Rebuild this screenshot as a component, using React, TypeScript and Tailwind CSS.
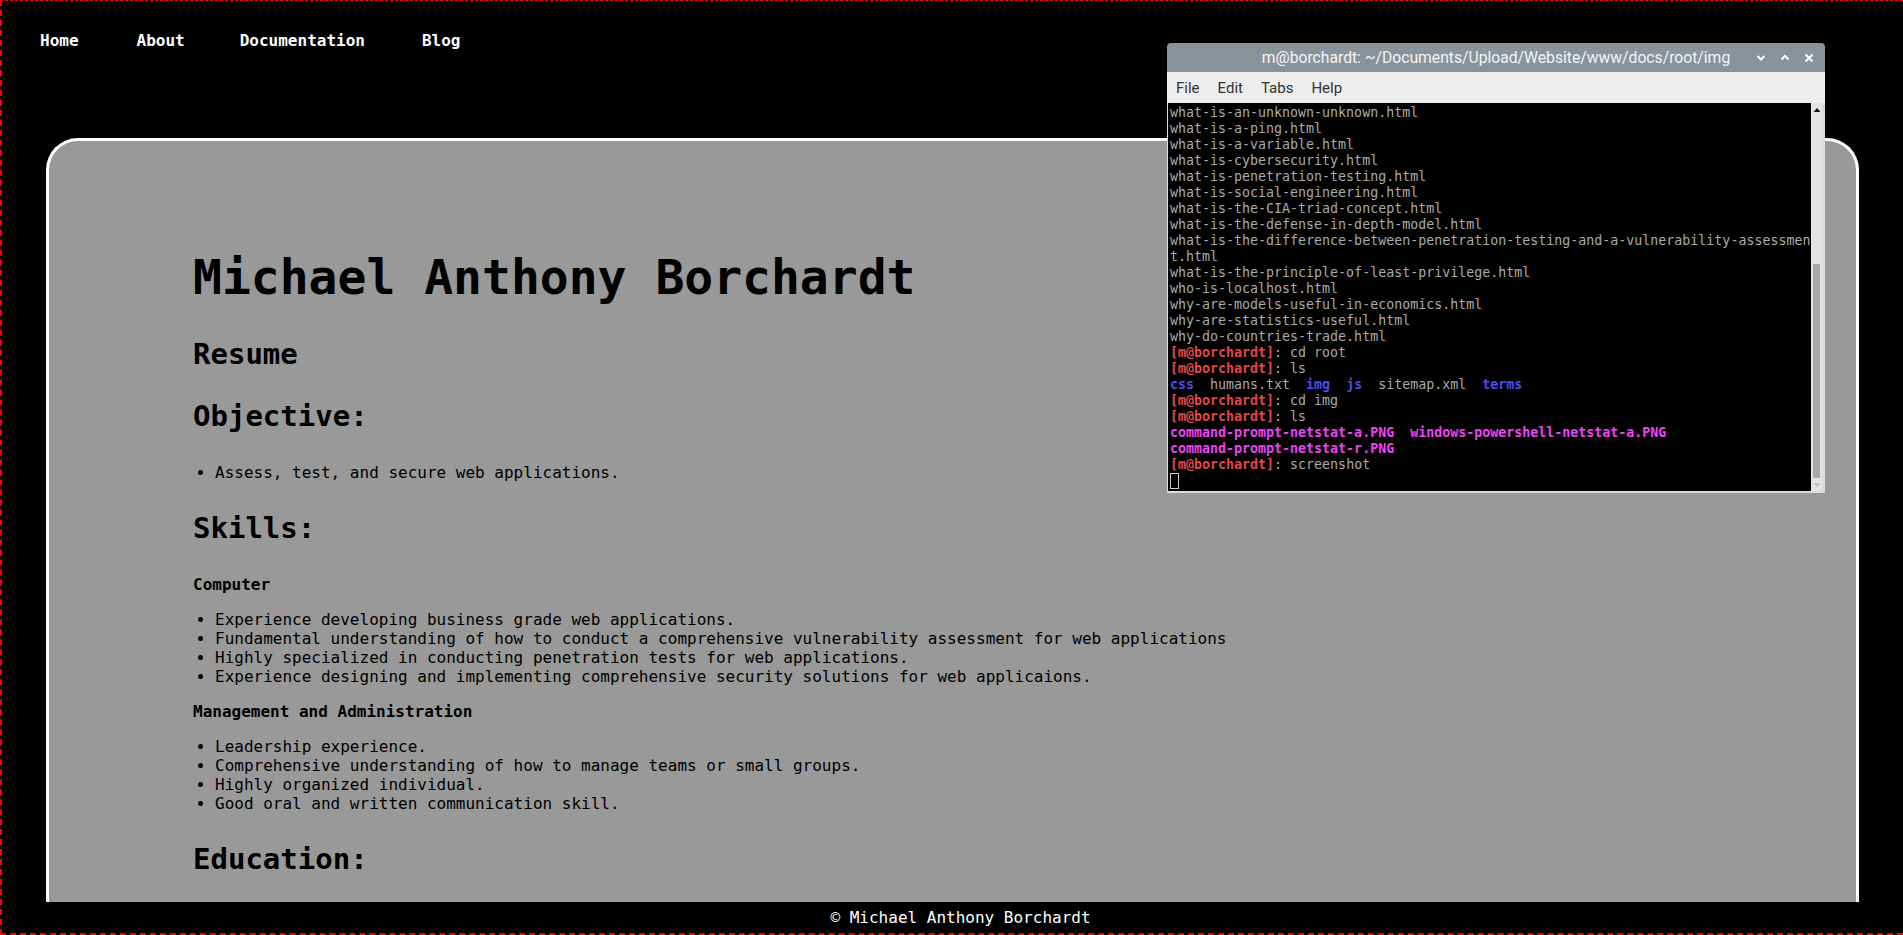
import React from "react";

type Kind = "n" | "p" | "d" | "m";
type Seg = { t: string; k?: Kind };

const segClass: Record<Kind, string> = {
  n: "text-[#aaaaaa]",
  p: "text-[#e44848] font-bold",
  d: "text-[#4c4cec] font-bold",
  m: "text-[#ee44ee] font-bold",
};

const prompt = (cmd: string): Seg[] => [
  { t: "[m@borchardt]", k: "p" },
  { t: ": " + cmd, k: "n" },
];

const termLines: Seg[][] = [
  [{ t: "what-is-an-unknown-unknown.html" }],
  [{ t: "what-is-a-ping.html" }],
  [{ t: "what-is-a-variable.html" }],
  [{ t: "what-is-cybersecurity.html" }],
  [{ t: "what-is-penetration-testing.html" }],
  [{ t: "what-is-social-engineering.html" }],
  [{ t: "what-is-the-CIA-triad-concept.html" }],
  [{ t: "what-is-the-defense-in-depth-model.html" }],
  [{ t: "what-is-the-difference-between-penetration-testing-and-a-vulnerability-assessmen" }],
  [{ t: "t.html" }],
  [{ t: "what-is-the-principle-of-least-privilege.html" }],
  [{ t: "who-is-localhost.html" }],
  [{ t: "why-are-models-useful-in-economics.html" }],
  [{ t: "why-are-statistics-useful.html" }],
  [{ t: "why-do-countries-trade.html" }],
  prompt("cd root"),
  prompt("ls"),
  [
    { t: "css", k: "d" },
    { t: "  humans.txt  " },
    { t: "img", k: "d" },
    { t: "  " },
    { t: "js", k: "d" },
    { t: "  sitemap.xml  " },
    { t: "terms", k: "d" },
  ],
  prompt("cd img"),
  prompt("ls"),
  [
    { t: "command-prompt-netstat-a.PNG", k: "m" },
    { t: "  " },
    { t: "windows-powershell-netstat-a.PNG", k: "m" },
  ],
  [{ t: "command-prompt-netstat-r.PNG", k: "m" }],
  prompt("screenshot"),
];

function Terminal() {
  return (
    <div className="absolute left-[1165px] top-[42px] w-[658px] h-[450px] flex flex-col">
      {/* title bar */}
      <div className="relative h-[29px] bg-[#8a939a] rounded-t-[4px] flex items-center justify-center">
        <span className="font-['Roboto',sans-serif] text-[15.7px] leading-[20px] text-[#f4f4f4]">
          m@borchardt: ~/Documents/Upload/Website/www/docs/root/img
        </span>
        <div className="absolute right-[11px] top-0 h-full flex items-center gap-[14px]">
          <svg width="10" height="10" viewBox="0 0 10 10">
            <polyline points="1.5,3 5,6.5 8.5,3" fill="none" stroke="#ffffff" strokeWidth="2" />
          </svg>
          <svg width="10" height="10" viewBox="0 0 10 10">
            <polyline points="1.5,6.5 5,3 8.5,6.5" fill="none" stroke="#ffffff" strokeWidth="2" />
          </svg>
          <svg width="10" height="10" viewBox="0 0 10 10">
            <path d="M1.5 1.5 L8.5 8.5 M8.5 1.5 L1.5 8.5" fill="none" stroke="#ffffff" strokeWidth="2" />
          </svg>
        </div>
      </div>
      {/* menu bar */}
      <div className="h-[31px] bg-[#ededed] flex items-center pt-[2px] pl-[9px] gap-[18px] font-['Roboto',sans-serif] text-[15px] text-[#333333]">
        <span>File</span>
        <span>Edit</span>
        <span>Tabs</span>
        <span>Help</span>
      </div>
      {/* terminal body */}
      <div className="flex-1 flex bg-[#dcdcdc] pl-[1px] pr-[3px] pb-[2px]">
        <div className="flex-1 bg-black pl-[2px] pt-[2px] overflow-hidden font-['DejaVu_Sans_Mono',monospace] text-[13.3px]">
          {termLines.map((line, i) => (
            <div key={i} className="h-[16px] leading-[16px] whitespace-pre">
              {line.map((s, j) => (
                <span key={j} className={segClass[s.k ?? "n"]}>
                  {s.t}
                </span>
              ))}
            </div>
          ))}
          <div className="h-[16px] flex items-center">
            <div className="w-[9px] h-[16px] border border-[#d0d0d0]" />
          </div>
        </div>
        {/* scrollbar */}
        <div className="w-[11px] bg-[#e4e4e4] flex flex-col items-center">
          <svg width="8" height="8" viewBox="0 0 8 8" className="mt-[3px]">
            <polygon points="0.5,6 4,2 7.5,6" fill="#111111" />
          </svg>
          <div className="mt-[150px] w-[7px] h-[214px] bg-[#a9a9a9]" />
          <svg width="8" height="8" viewBox="0 0 8 8" className="mt-[3px]">
            <polygon points="0.5,2 4,6 7.5,2" fill="#c4c4c4" />
          </svg>
        </div>
      </div>
    </div>
  );
}

function Bullets({ items }: { items: string[] }) {
  return (
    <ul className="list-disc list-outside pl-[22px] text-[16px] leading-[19px]">
      {items.map((t, i) => (
        <li key={i}>{t}</li>
      ))}
    </ul>
  );
}

export default function App() {
  return (
    <div className="relative w-full h-[935px] overflow-hidden bg-black border-dashed border-[#ff0000] border-t border-l-2 border-b-2 border-r-0 flex flex-col font-['DejaVu_Sans_Mono',monospace]">
      {/* nav */}
      <nav className="h-[137px] shrink-0 pt-[30px] pl-[38px] flex items-start text-white text-[16px] leading-[19px] font-bold">
        <a>Home</a>
        <a className="ml-[58px]">About</a>
        <a className="ml-[55px]">Documentation</a>
        <a className="ml-[57px]">Blog</a>
      </nav>

      {/* main card */}
      <div className="flex-1 overflow-hidden pl-[44px] pr-[44px]">
        <div className="min-h-[800px] bg-[#999999] border-[3px] border-b-0 border-white rounded-t-[32px] pt-[108px] pl-[144px] text-black">
          <h1 className="text-[48px] leading-[56px] font-bold">Michael Anthony Borchardt</h1>
          <h2 className="mt-[32px] text-[29px] leading-[34px] font-bold">Resume</h2>
          <h2 className="mt-[28px] text-[29px] leading-[34px] font-bold">Objective:</h2>
          <div className="mt-[30px]">
            <Bullets items={["Assess, test, and secure web applications."]} />
          </div>
          <h2 className="mt-[29px] text-[29px] leading-[34px] font-bold">Skills:</h2>
          <h4 className="mt-[30px] text-[16px] leading-[19px] font-bold">Computer</h4>
          <div className="mt-[16px]">
            <Bullets
              items={[
                "Experience developing business grade web applications.",
                "Fundamental understanding of how to conduct a comprehensive vulnerability assessment for web applications",
                "Highly specialized in conducting penetration tests for web applications.",
                "Experience designing and implementing comprehensive security solutions for web applicaions.",
              ]}
            />
          </div>
          <h4 className="mt-[16px] text-[16px] leading-[19px] font-bold">Management and Administration</h4>
          <div className="mt-[16px]">
            <Bullets
              items={[
                "Leadership experience.",
                "Comprehensive understanding of how to manage teams or small groups.",
                "Highly organized individual.",
                "Good oral and written communication skill.",
              ]}
            />
          </div>
          <h2 className="mt-[29px] text-[29px] leading-[34px] font-bold">Education:</h2>
        </div>
      </div>

      {/* footer */}
      <footer className="h-[31px] shrink-0 bg-black flex items-center justify-center pl-[16px] text-white text-[16px] leading-[19px]">
        © Michael Anthony Borchardt
      </footer>

      <Terminal />
    </div>
  );
}
